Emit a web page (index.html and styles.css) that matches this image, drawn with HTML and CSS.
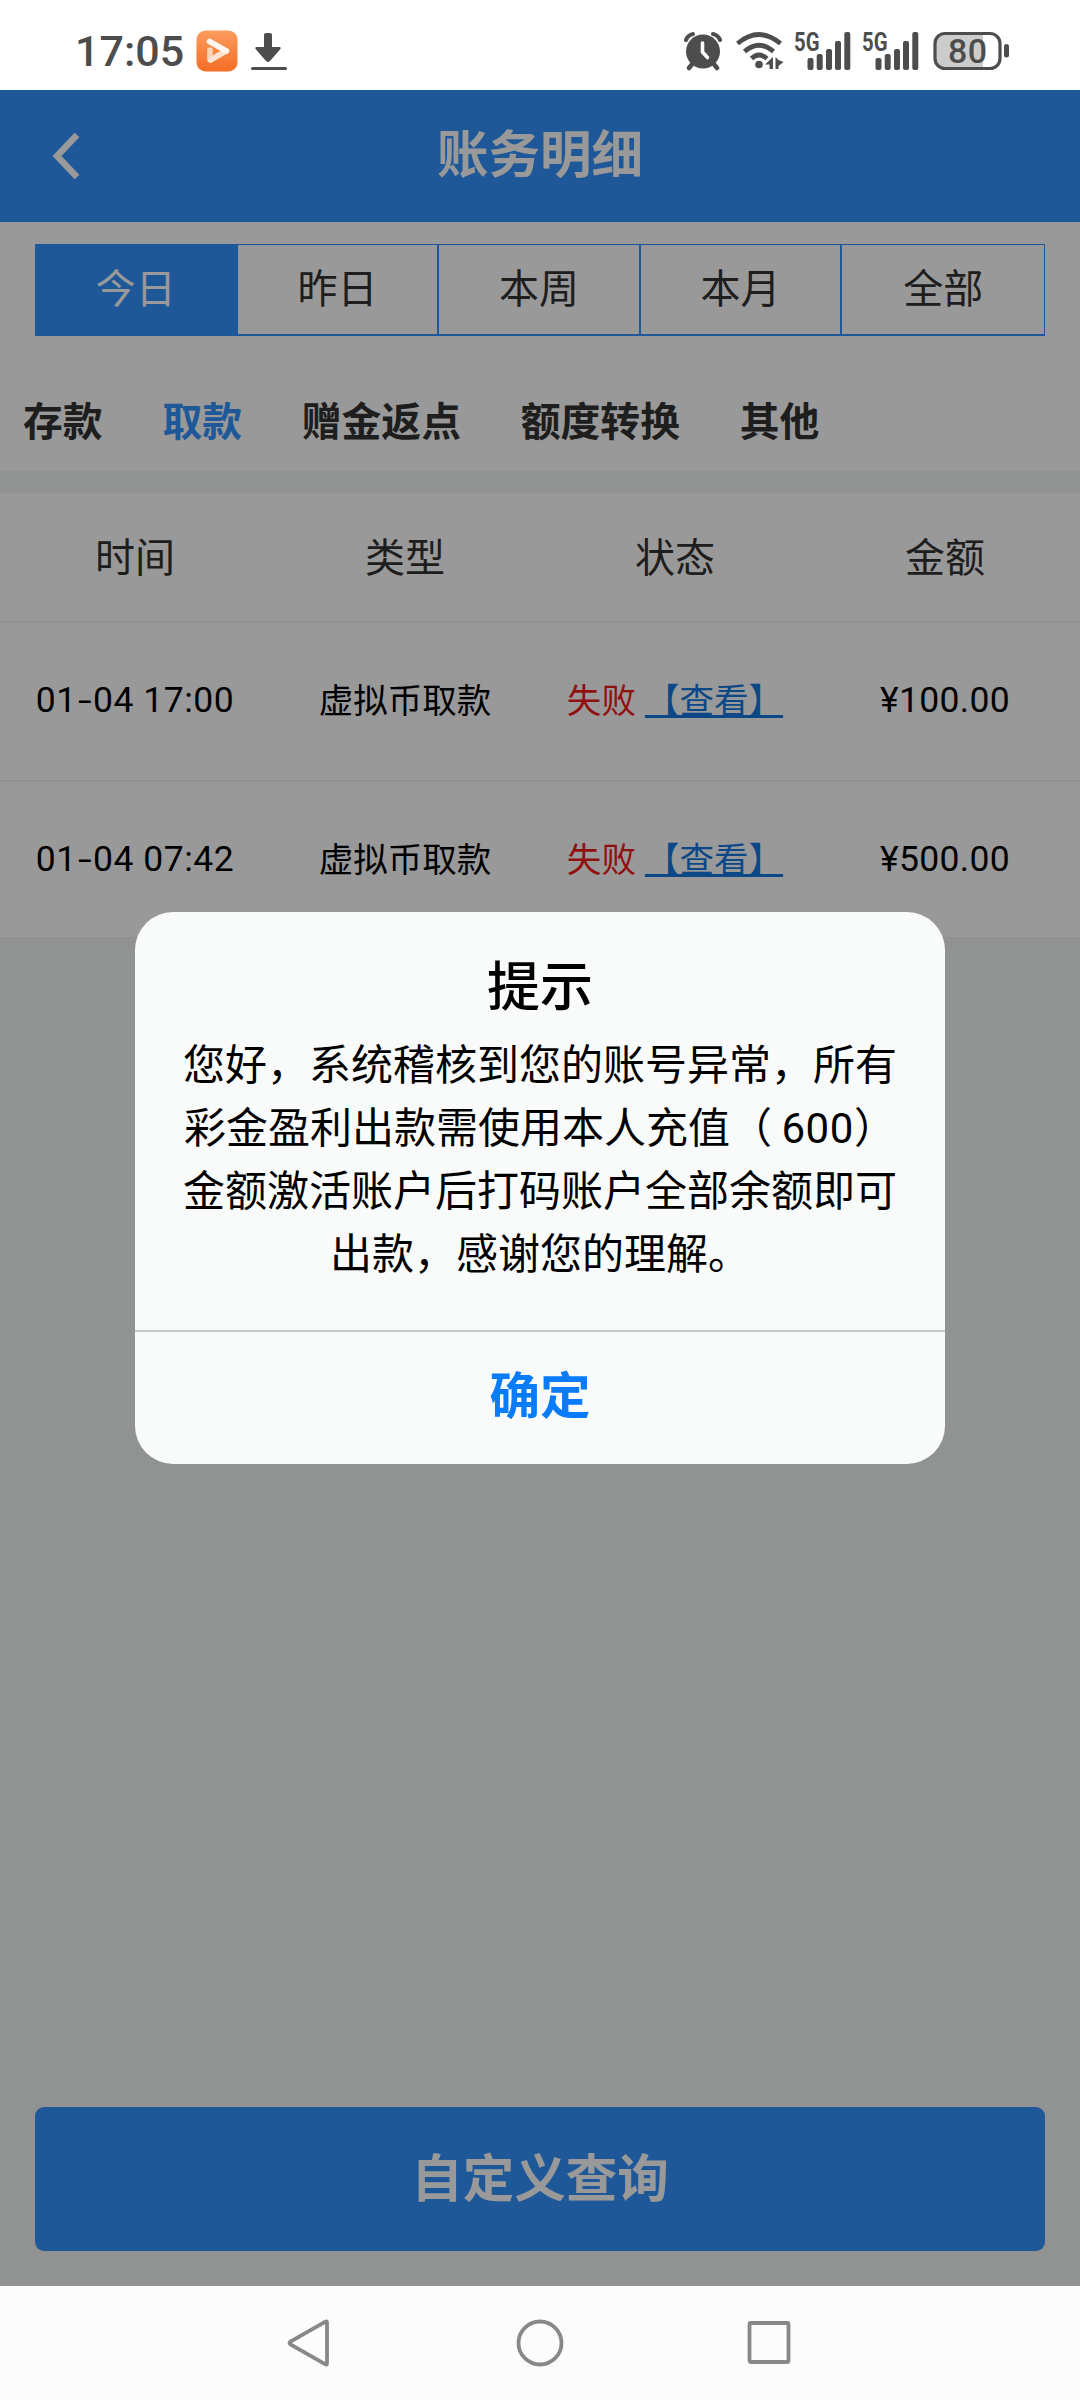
FILE: index.html
```html
<!DOCTYPE html>
<html lang="zh-CN">
<head>
<meta charset="utf-8">
<title>账务明细</title>
<link rel="stylesheet" href="styles.css">
</head>
<body>
<div class="phone">
  <header class="status-bar">
    <div class="status-left">
      <span class="clock">17:05</span>
      <svg class="app-icon" width="42" height="42" viewBox="0 0 42 42">
        <defs>
          <linearGradient id="orange" x1="0" y1="0" x2="0" y2="1"><stop offset="0" stop-color="#fb9c5e"/><stop offset="1" stop-color="#f66d24"/></linearGradient>
        </defs>
        <rect x=".5" y=".5" width="41" height="41" rx="9" fill="url(#orange)"/>
        <g fill="none" stroke-linecap="round" stroke-linejoin="round" stroke-width="5.6">
          <path d="M14 20v9" stroke="#fdd3b8"/>
          <path d="M14.500 30L30 21" stroke="#fee3d1"/>
          <path d="M13.500 11.500L30.500 21" stroke="#fff6ef"/>
        </g>
      </svg>
      <svg class="download" width="38" height="40" viewBox="0 0 38 40">
        <path d="M14 4q0-2 2-2h4q2 0 2 2v12h7q3 0 1 2.500L20 30q-2 2-4 0L6 18.500Q4 16 7 16h7z" fill="#4d4d4d"/>
        <rect x="1" y="36" width="36" height="3" rx="1.500" fill="#4d4d4d"/>
      </svg>
    </div>
    <div class="status-right">
      <svg class="alarm" width="38" height="40" viewBox="0 0 38 40">
        <g fill="none" stroke="#4d4d4d" stroke-linecap="round">
          <path d="M2 9Q4 4 9 3M36 9Q34 4 29 3" stroke-width="4"/>
          <path d="M9 32l-4 5M29 32l4 5" stroke-width="4.500"/>
        </g>
        <circle cx="19" cy="20.500" r="17" fill="#4d4d4d"/>
        <path d="M18.500 12v9l5 5.500" fill="none" stroke="#fff" stroke-width="3.600" stroke-linecap="round" stroke-linejoin="round"/>
      </svg>
      <svg class="wifi" width="48" height="40" viewBox="0 0 48 40">
        <g fill="none" stroke="#4d4d4d" stroke-width="4.800">
          <path d="M1.500 12.500Q23 -5.500 44.500 12.500"/>
          <path d="M8.500 20.500Q23 8 37.500 20.500"/>
          <path d="M15.500 27.500Q23 20.500 31 27.500"/>
        </g>
        <circle cx="23" cy="33.500" r="3.800" fill="#4d4d4d"/>
        <path d="M37 26v12h-3.500v-4.500h-4.500zM39.500 26v12h3v-3l5-4-5-2z" fill="#4d4d4d"/>
      </svg>
      <svg class="signal" width="58" height="56" viewBox="0 -8 58 56">
        <text x="0" y="20" class="net" textLength="25.500" lengthAdjust="spacingAndGlyphs">5G</text>
        <g fill="#4d4d4d">
          <rect x="13.500" y="27" width="6" height="12" rx="2"/><rect x="22.700" y="23" width="6" height="16" rx="2"/><rect x="32" y="18" width="6" height="21" rx="2"/><rect x="41" y="10" width="6" height="29" rx="2"/><rect x="50.300" y="1" width="6" height="38" rx="2"/>
        </g>
      </svg>
      <svg class="signal" width="58" height="56" viewBox="0 -8 58 56">
        <text x="0" y="20" class="net" textLength="25.500" lengthAdjust="spacingAndGlyphs">5G</text>
        <g fill="#4d4d4d">
          <rect x="13.500" y="27" width="6" height="12" rx="2"/><rect x="22.700" y="23" width="6" height="16" rx="2"/><rect x="32" y="18" width="6" height="21" rx="2"/><rect x="41" y="10" width="6" height="29" rx="2"/><rect x="50.300" y="1" width="6" height="38" rx="2"/>
        </g>
      </svg>
      <svg class="battery" width="77" height="40" viewBox="0 0 77 40">
        <path d="M12 2H50V37H12Q2 37 2 27V12Q2 2 12 2z" fill="#ccc"/>
        <rect x="2" y="2.500" width="65" height="35" rx="10" fill="none" stroke="#4d4d4d" stroke-width="3.200"/>
        <rect x="71" y="13" width="5" height="13.500" rx="2.500" fill="#4d4d4d"/>
        <text x="15" y="32" class="level" textLength="39" lengthAdjust="spacing">80</text>
      </svg>
    </div>
  </header>

  <main class="page">
    <div class="title-bar">
      <svg class="back" width="28" height="48" viewBox="0 0 28 48"><path d="M25 3L5 24L25 45" fill="none" stroke="#fff" stroke-width="6.500"/></svg>
      <h1>账务明细</h1>
    </div>

    <section class="filters">
      <div class="ranges">
        <span class="range active">今日</span><span class="range">昨日</span><span class="range">本周</span><span class="range">本月</span><span class="range">全部</span>
      </div>
      <nav class="kinds">
        <span>存款</span><span class="current">取款</span><span>赠金返点</span><span>额度转换</span><span>其他</span>
      </nav>
    </section>

    <section class="table">
      <div class="row head"><span>时间</span><span>类型</span><span>状态</span><span>金额</span></div>
      <div class="row"><span class="num date">01<span class="dash">-</span>04 17:00</span><span>虚拟币取款</span><span class="state"><em>失败</em><a>【查看】</a></span><span class="num">¥100.00</span></div>
      <div class="row"><span class="num date">01<span class="dash">-</span>04 07:42</span><span>虚拟币取款</span><span class="state"><em>失败</em><a>【查看】</a></span><span class="num">¥500.00</span></div>
    </section>

    <div class="query">自定义查询</div>

    <div class="mask">
      <div class="dialog">
        <div class="dialog-body">
          <h2>提示</h2>
          <p>您好，系统稽核到您的账号异常，所有<br>彩金盈利出款需使用本人充值（ <span class="sum">600</span>）<br>金额激活账户后打码账户全部余额即可<br>出款，感谢您的理解。</p>
        </div>
        <div class="confirm">确定</div>
      </div>
    </div>
  </main>

  <footer class="nav-bar">
    <svg width="48" height="52" viewBox="0 0 48 52"><path d="M41 5.500V46.500Q41 48.500 39 47L4.500 27.500Q2.500 26 4.500 24.500L39 5Q41 3.500 41 5.500z" fill="none" stroke="#888" stroke-width="3.800"/></svg>
    <svg width="48" height="52" viewBox="0 0 48 52"><circle cx="24" cy="26" r="21.500" fill="none" stroke="#888" stroke-width="3.800"/></svg>
    <svg width="48" height="52" viewBox="0 0 48 52"><rect x="3.500" y="6" width="39" height="39" rx="1.500" fill="none" stroke="#888" stroke-width="3.800"/></svg>
  </footer>
</div>
</body>
</html>
```
FILE: styles.css
```css
* { box-sizing: border-box; }
body {
  margin: 0;
  font-family: "Noto Sans CJK SC", sans-serif;
  color: #000;
}
h1, h2, p { margin: 0; }

.phone {
  width: 1080px;
  height: 2400px;
  display: flex;
  flex-direction: column;
  overflow: hidden;
}

/* system status bar */
.status-bar {
  height: 90px;
  flex: none;
  display: flex;
  justify-content: space-between;
  align-items: center;
  padding: 12px 70px 0 75px;
  background: #fff;
}
.status-left, .status-right { display: flex; align-items: center; }
.clock {
  width: 121px;
  font: 500 43px/50px Roboto, sans-serif;
  color: #4d4d4d;
}
.download { margin-left: 12px; }
.wifi { margin-left: 14px; }
.signal { margin-left: 10px; }
.battery { margin-left: 13px; }
.net { font: 700 25px Roboto, sans-serif; fill: #4d4d4d; }
.level { font: 500 34px Roboto, sans-serif; fill: #4d4d4d; }

/* page under the mask */
.page {
  position: relative;
  flex: 1;
  display: flex;
  flex-direction: column;
  background: #f1f6f4;
}
.title-bar {
  height: 132px;
  flex: none;
  display: grid;
  grid-template-columns: 80px 1fr 80px;
  align-items: center;
  background: #3293fd;
  color: #fff;
}
.back { margin-left: 52px; }
.title-bar h1 {
  padding-bottom: 10px;
  font-size: 51.500px;
  line-height: 76px;
  font-weight: 700;
  text-align: center;
}
.filters {
  height: 249px;
  flex: none;
  padding: 22px 35px 0;
  background: #fff;
  color: #333;
}
.ranges {
  height: 92px;
  display: grid;
  grid-template-columns: repeat(5, 1fr);
  border: 1px solid #3293fd;
  border-bottom-width: 2px;
  font-size: 40px;
}
.range {
  display: flex;
  align-items: center;
  justify-content: center;
  padding-bottom: 7px;
  border-right: 2px solid #3293fd;
}
.range.active { background: #3293fd; color: #fff; }
.range:last-child { border-right: 0; }
.kinds {
  display: flex;
  gap: 59.800px;
  margin: 54px 0 0 -12px;
  font-size: 39.800px;
  line-height: 58px;
  font-weight: 700;
}
.kinds .current { color: #3293fd; }

.table {
  margin-top: 23px;
  background: #fff;
  flex: none;
}
.row {
  height: 159px;
  display: grid;
  grid-template-columns: repeat(4, 1fr);
  align-items: center;
  justify-items: center;
  padding-bottom: 7px;
  border-bottom: 2px solid #f1f3f2;
  font-size: 34.560px;
  white-space: nowrap;
}
.row.head { height: 129px; padding-bottom: 6px; font-size: 40px; color: #333; }
.row:last-child { height: 157px; padding-bottom: 5px; }
.num { font-family: Roboto, sans-serif; font-size: 35.500px; letter-spacing: .3px; padding-top: 4px; }
.num.date { letter-spacing: .5px; }
.dash { display: inline-block; transform: scaleX(1.4); margin: 0 3px; }
.state { display: flex; gap: 9px; }
.state em { font-style: normal; color: #f11c1c; }
.state a {
  color: #1479e0;
  text-decoration: underline;
  text-decoration-thickness: 3px;
  text-underline-offset: 2px;
  text-decoration-skip-ink: none;
}
.query {
  margin: auto 35px 35px;
  height: 144px;
  flex: none;
  display: flex;
  align-items: center;
  justify-content: center;
  padding-bottom: 10px;
  border-radius: 9px;
  background: #3293fd;
  color: #fff;
  font-size: 51.500px;
  font-weight: 700;
}

/* alert dialog */
.mask {
  position: absolute;
  inset: 0;
  display: flex;
  align-items: center;
  justify-content: center;
  background: rgba(0, 0, 0, .4);
}
.dialog {
  width: 810px;
  height: 552px;
  display: flex;
  flex-direction: column;
  border-radius: 38px;
  background: #f9fbfa;
  text-align: center;
}
.dialog-body { flex: 1; padding: 32px 40px 0; }
.dialog h2 { font-size: 53px; line-height: 78px; font-weight: 500; }
.dialog p { font-size: 42px; line-height: 63px; margin-top: 8px; white-space: nowrap; }
.sum { font-family: Roboto, sans-serif; line-height: 1; letter-spacing: .6px; }
.confirm {
  height: 134px;
  display: flex;
  align-items: center;
  justify-content: center;
  padding-bottom: 12px;
  border-top: 2px solid #c7c9c8;
  color: #087cfa;
  font-size: 50.500px;
  font-weight: 700;
}

/* system navigation */
.nav-bar {
  height: 114px;
  flex: none;
  display: flex;
  justify-content: center;
  align-items: center;
  gap: 182px;
  background: #fcfcfc;
}
```
